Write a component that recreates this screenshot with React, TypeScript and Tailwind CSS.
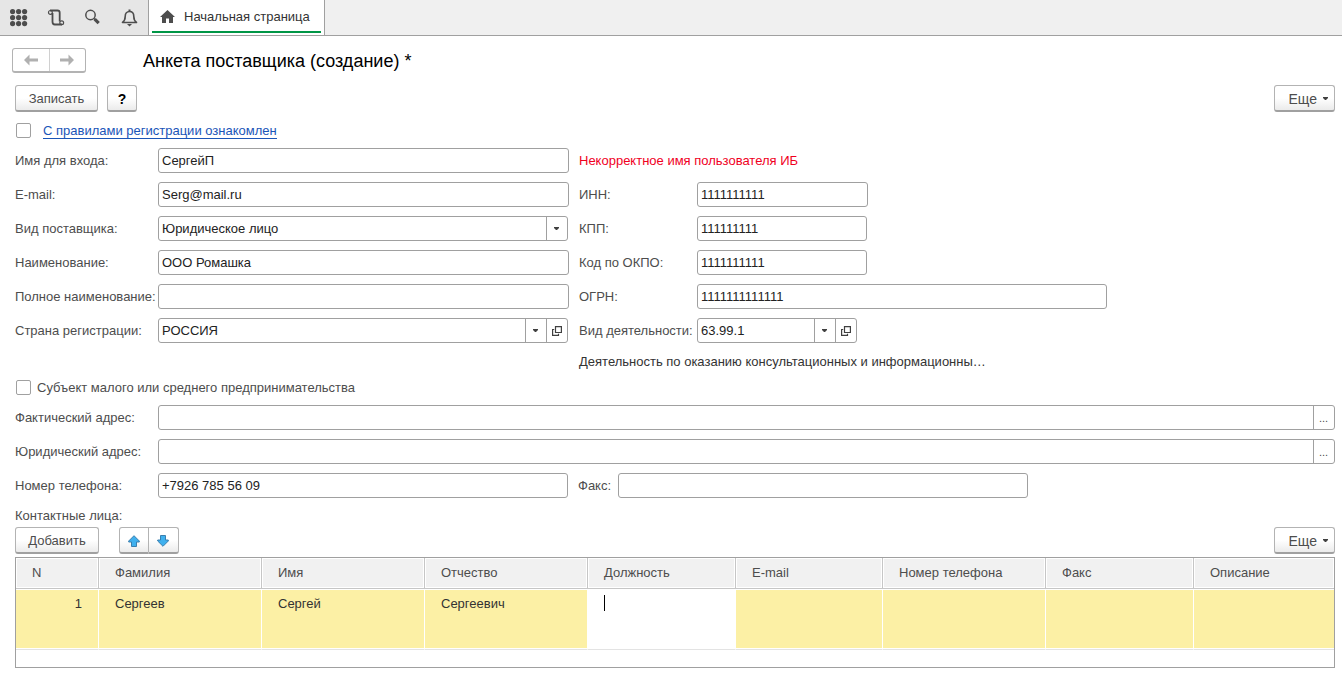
import { useState, type ReactNode } from "react";

const buttonStyle =
  "h-[27px] rounded-[3px] border border-[#b3b3b3] border-b-2 border-b-[#a0a0a0] bg-linear-to-b from-white from-50% to-[#ebebeb] pt-px text-[#4d4d4d]";

const CaretIcon = () => (
  <svg width="5" height="3" viewBox="0 0 5 3" fill="#404040" aria-hidden="true">
    <path d="M0 0h5v1L3 3H2L0 1z" />
  </svg>
);

const OpenIcon = () => (
  <svg width="10" height="10" viewBox="0 0 10 10" fill="none" stroke="#404040" strokeWidth="1.2" aria-hidden="true">
    <path d="M3.5 0.6h5.900v5.900H3.500zM2.200 3.500H0.600v5.900h5.900V7.800" />
  </svg>
);

const ArrowIcon = ({ className }: { className?: string }) => (
  <svg className={className} width="14" height="12" viewBox="0 0 14 12" fill="#b0b0b0" aria-hidden="true">
    <path d="M0 6 5.500 0.500v4H14v3H5.500v4z" />
  </svg>
);

const MoveIcon = ({ className }: { className?: string }) => (
  <svg className={className} width="12" height="12" viewBox="0 0 12 12" aria-hidden="true">
    <path d="M6 0.7 11.3 6v1H8.5v4.5h-5V7H0.7V6z" fill="#3fb0ee" stroke="#3a7fae" />
  </svg>
);

interface FieldProps {
  id: string;
  label: string;
  value?: string;
  width?: string;
  labelClass?: string;
  children?: ReactNode;
}

const Field = ({ id, label, value = "", width = "", labelClass = "w-[143px]", children }: FieldProps) => {
  const [text, setText] = useState<string>(value);

  return (
    <div className="flex min-w-0 items-center">
      <label htmlFor={id} className={`shrink-0 whitespace-nowrap ${labelClass}`}>
        {label}
      </label>
      <div className={`flex h-[25px] min-w-0 flex-1 overflow-hidden rounded-[3px] border border-[#a0a0a0] ${width}`}>
        <input
          id={id}
          className="min-w-0 flex-1 px-[3px] text-[#222] outline-none"
          value={text}
          onChange={(e) => setText(e.target.value)}
        />
        {children}
      </div>
    </div>
  );
};

const FieldButton = ({ label, children }: { label: string; children: ReactNode }) => (
  <button
    aria-label={label}
    className="flex w-[21px] shrink-0 items-center justify-center border-l border-[#a0a0a0] pr-px text-[11px] text-[#4d4d4d]"
  >
    {children}
  </button>
);

const SelectField = ({ id, label, options }: { id: string; label: string; options: string[] }) => (
  <div className="flex min-w-0 items-center">
    <label htmlFor={id} className="w-[143px] shrink-0 whitespace-nowrap">
      {label}
    </label>
    <div className="relative min-w-0 max-w-[410px] flex-1">
      <select
        id={id}
        className="block h-[25px] w-full appearance-none rounded-[3px] border border-[#a0a0a0] bg-white px-[3px] text-[#222] outline-none"
      >
        {options.map((option) => (
          <option key={option}>{option}</option>
        ))}
      </select>
      <span className="pointer-events-none absolute inset-y-px right-px flex w-[21px] items-center justify-center border-l border-[#a0a0a0] pr-px">
        <CaretIcon />
      </span>
    </div>
  </div>
);

const Checkbox = ({ id }: { id: string }) => (
  <input
    id={id}
    type="checkbox"
    className="size-[15px] shrink-0 appearance-none rounded-[2px] border border-[#a0a0a0] bg-white checked:bg-[#009646]"
  />
);

const MoreButton = () => (
  <button className={`flex w-[61px] items-center justify-end gap-[6px] pr-[6px] text-sm ${buttonStyle}`}>
    Еще
    <CaretIcon />
  </button>
);

const TopBar = () => (
  <header className="flex h-9 border-b border-[#a0a0a0] bg-[#f0f0f0]">
    <div className="flex w-[148px] shrink-0 items-center gap-[19px] bg-[#e6e6e6] pl-[10px]">
      <button aria-label="Меню">
        <svg width="18" height="18" viewBox="0 0 18 18" fill="#4d4d4d">
          {[2.6, 8.6, 14.6].map((y) => [2.6, 8.6, 14.6].map((x) => <circle key={`${x}-${y}`} cx={x} cy={y} r="2.6" />))}
        </svg>
      </button>
      <button aria-label="История">
        <svg width="18" height="18" viewBox="0 0 18 18" fill="none" stroke="#4d4d4d">
          <path d="M3 1.500H10.500C12 1.500 12.700 2.300 12.700 3.700V12.500M5.500 4V12.800C5.500 14.700 6.300 15.500 7.700 15.500H15" strokeWidth="1.8" />
          <circle cx="3.400" cy="3.400" r="1.900" strokeWidth="1.200" />
          <circle cx="14.700" cy="13.700" r="1.900" strokeWidth="1.200" />
        </svg>
      </button>
      <button aria-label="Поиск">
        <svg width="18" height="18" viewBox="0 0 18 18" fill="none" stroke="#4d4d4d">
          <circle cx="6.500" cy="6" r="4.700" strokeWidth="1.500" />
          <path d="m10 9.500 1.500 1.500" strokeWidth="1.500" />
          <path d="m10.700 10.200 4 4" strokeWidth="3.200" />
        </svg>
      </button>
      <button aria-label="Уведомления">
        <svg width="18" height="18" viewBox="0 0 18 18" fill="none" stroke="#4d4d4d" strokeWidth="1.6">
          <path
            d="M1.500 13.500C3.500 12 4.200 10.500 4.200 7.500C4.200 4.300 6 2.500 8.500 2.500S12.800 4.300 12.800 7.500C12.800 10.500 13.500 12 15.500 13.500z"
            strokeLinejoin="round"
          />
          <path d="M8.500 2.500V0.500" strokeWidth="2" />
          <path d="M6 15h5l-2.500 2.500z" fill="#4d4d4d" stroke="none" />
        </svg>
      </button>
    </div>
    <a
      href="#home"
      className="flex w-[177px] shrink-0 border-x border-[#a0a0a0] bg-white px-[3px] pb-[2px] whitespace-nowrap text-[#333]"
    >
      <span className="flex flex-1 items-center gap-[9px] border-b-2 border-[#009646] pt-[2px] pl-2">
        <svg width="15" height="13" viewBox="0 0 15 13" fill="#4d4d4d" aria-hidden="true">
          <path d="M7.500 0 15 7h-2v6H9V8.500H6V13H2V7H0z" />
        </svg>
        Начальная страница
      </span>
    </a>
  </header>
);

const columns = [
  { title: "N", width: "w-[83px]", value: "1" },
  { title: "Фамилия", width: "w-[163px]", value: "Сергеев" },
  { title: "Имя", width: "w-[163px]", value: "Сергей" },
  { title: "Отчество", width: "w-[163px]", value: "Сергеевич" },
  { title: "Должность", width: "w-[148px]", value: "" },
  { title: "E-mail", width: "w-[147px]", value: "" },
  { title: "Номер телефона", width: "w-[163px]", value: "" },
  { title: "Факс", width: "w-[148px]", value: "" },
  { title: "Описание", width: "w-[140px]", value: "" },
];

const ContactsTable = () => (
  <div className="mt-[3px] border border-[#a0a0a0] pb-[17px]">
    <table className="w-full table-fixed border-separate border-spacing-0 text-left">
      <thead>
        <tr>
          {columns.map(({ title, width }) => (
            <th
              key={title}
              className={`h-[31px] border-r border-b border-[#c6c6c6] bg-[#f1f1f1] pl-4 font-normal whitespace-nowrap shadow-[inset_0_0_0_1px_#fff] last:border-r-0 ${width}`}
            >
              {title}
            </th>
          ))}
        </tr>
      </thead>
      <tbody>
        <tr>
          {columns.map(({ title, value }) => (
            <td
              key={title}
              className={`h-[61px] border-r border-b border-r-white border-b-[#e3e3e3] px-4 pt-[7px] align-top text-[#333] shadow-[inset_0_1px_0_#fff,inset_0_-1px_0_#fff] first:text-right last:border-r-0 ${
                title === "Должность" ? "bg-white" : "bg-[#fcf0a5]"
              }`}
            >
              {title === "Должность" ? (
                <div className="relative">
                  <input aria-label={title} className="block h-4 w-full outline-none" />
                  <span className="absolute -top-px left-0 h-4 w-px bg-black" />
                </div>
              ) : (
                value
              )}
            </td>
          ))}
        </tr>
      </tbody>
    </table>
  </div>
);

const App = () => (
  <div className="min-h-screen bg-white font-['Liberation_Sans',Arial,sans-serif] text-[13px] leading-4 text-[#4d4d4d]">
    <TopBar />

    <main className="pr-[7px] pl-[15px]">
      <div className="-ml-[3px] flex items-center pt-3">
        <div className="flex h-[25px] w-[74px] rounded-[3px] border border-[#b3b3b3] border-b-2">
          <button aria-label="Назад" className="flex flex-1 items-center justify-center border-r border-[#d0d0d0]">
            <ArrowIcon />
          </button>
          <button aria-label="Вперед" className="flex flex-1 items-center justify-center">
            <ArrowIcon className="rotate-180" />
          </button>
        </div>
        <h1 className="ml-[57px] pt-px text-lg leading-6 text-black">Анкета поставщика (создание) *</h1>
      </div>

      <div className="mt-3 flex gap-[9px]">
        <button className={`w-[83px] ${buttonStyle}`}>Записать</button>
        <button aria-label="Справка" className={`w-[30px] ${buttonStyle}`}>
          <span className="text-sm font-bold text-black">?</span>
        </button>
        <div className="ml-auto">
          <MoreButton />
        </div>
      </div>

      <div className="mt-[11px] ml-px flex h-[15px] items-center gap-3">
        <Checkbox id="rules" />
        <label htmlFor="rules">
          <a href="#rules" className="border-b border-[#1a55b8] text-[#1a55b8]">
            С правилами регистрации ознакомлен
          </a>
        </label>
      </div>

      <div className="mt-[10px] grid grid-cols-[minmax(0,554px)_minmax(0,1fr)] gap-x-[10px] gap-y-[9px]">
        <Field id="login" label="Имя для входа:" value="СергейП" />
        <p className="self-center text-[#f0001e]">Некорректное имя пользователя ИБ</p>

        <Field id="email" label="E-mail:" value="Serg@mail.ru" />
        <Field id="inn" label="ИНН:" value="1111111111" labelClass="w-[118px]" width="max-w-[171px]" />

        <SelectField id="kind" label="Вид поставщика:" options={["Юридическое лицо", "Физическое лицо"]} />
        <Field id="kpp" label="КПП:" value="111111111" labelClass="w-[118px]" width="max-w-[170px]" />

        <Field id="name" label="Наименование:" value="ООО Ромашка" />
        <Field id="okpo" label="Код по ОКПО:" value="1111111111" labelClass="w-[118px]" width="max-w-[170px]" />

        <Field id="fullname" label="Полное наименование:" />
        <Field id="ogrn" label="ОГРН:" value="1111111111111" labelClass="w-[118px]" width="max-w-[410px]" />

        <Field id="country" label="Страна регистрации:" value="РОССИЯ" width="max-w-[410px]">
          <FieldButton label="Выбрать страну">
            <CaretIcon />
          </FieldButton>
          <FieldButton label="Открыть страну">
            <OpenIcon />
          </FieldButton>
        </Field>
        <Field id="activity" label="Вид деятельности:" value="63.99.1" labelClass="w-[118px]" width="max-w-[160px]">
          <FieldButton label="Выбрать вид деятельности">
            <CaretIcon />
          </FieldButton>
          <FieldButton label="Открыть вид деятельности">
            <OpenIcon />
          </FieldButton>
        </Field>

        <p className="col-start-2 mt-[2px] whitespace-nowrap text-[#333]">
          Деятельность по оказанию консультационных и информационны…
        </p>
      </div>

      <div className="mt-[10px] ml-px flex h-[15px] items-center gap-[6px]">
        <Checkbox id="small-business" />
        <label htmlFor="small-business">Субъект малого или среднего предпринимательства</label>
      </div>

      <div className="mt-[10px] flex flex-col gap-[9px]">
        <Field id="actual-address" label="Фактический адрес:">
          <FieldButton label="Выбрать фактический адрес">...</FieldButton>
        </Field>
        <Field id="legal-address" label="Юридический адрес:">
          <FieldButton label="Выбрать юридический адрес">...</FieldButton>
        </Field>
        <div className="grid grid-cols-[minmax(0,553px)_minmax(0,450px)] gap-[10px]">
          <Field id="phone" label="Номер телефона:" value="+7926 785 56 09" />
          <Field id="fax" label="Факс:" labelClass="w-10" />
        </div>
      </div>

      <h2 className="mt-[10px]">Контактные лица:</h2>
      <div className="mt-[3px] flex">
        <button className={`w-[84px] ${buttonStyle}`}>Добавить</button>
        <div className="ml-5 flex">
          <button aria-label="Вверх" className={`flex w-[30px] items-center justify-center rounded-r-none ${buttonStyle}`}>
            <MoveIcon />
          </button>
          <button
            aria-label="Вниз"
            className={`flex w-[30px] items-center justify-center rounded-l-none border-l-0 pr-[2px] ${buttonStyle}`}
          >
            <MoveIcon className="rotate-180" />
          </button>
        </div>
        <div className="ml-auto">
          <MoreButton />
        </div>
      </div>
      <ContactsTable />
    </main>
  </div>
);

export default App;
